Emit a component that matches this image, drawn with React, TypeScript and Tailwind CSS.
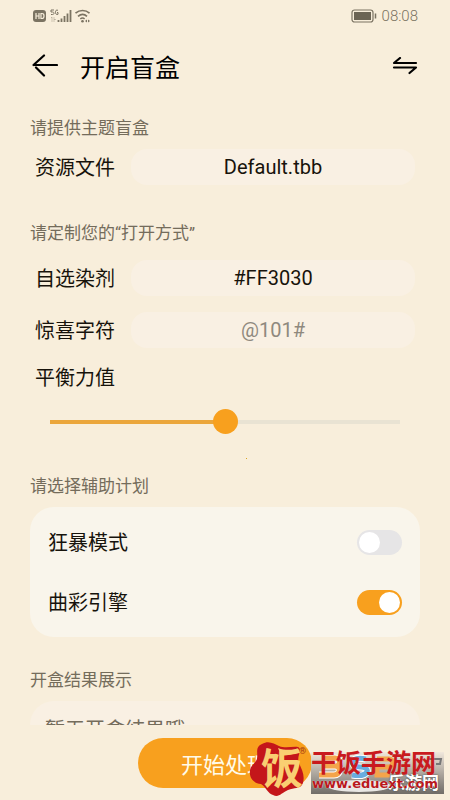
import { useState, type ReactNode } from "react";

const fontStack = "font-[Roboto,'Noto_Sans_CJK_SC',sans-serif]";
const cjkFont = "font-['Noto_Sans_CJK_SC',sans-serif]";

function StatusBar() {
  return (
    <div className="flex h-8 shrink-0 items-center justify-between px-8 text-[#7b7362]">
      <div className="flex items-center">
        <svg width="58" height="14" viewBox="0 0 58 14" fill="none" aria-label="信号状态">
          <rect x="1" y="1" width="13" height="12" rx="3" fill="currentColor" />
          <path d="M4 4v6M7 4v6M4 7h3M9 4.500v5h1c1.600 0 2-1 2-2.500s-.4-2.500-2-2.500z" stroke="#f8eedb" strokeWidth="1.200" />
          <path d="M22 1h-3v2h1.500c1 0 1.500.5 1.500 1.200S21.500 5.500 20.500 5.500H19M26 1.300c-1.800-.7-2.500.3-2.500 2s.7 2.500 2.500 2V3.500h-1" stroke="currentColor" strokeWidth="1" />
          <path d="M19 9l1-1v5M22 8v5M22 10.500h2" stroke="currentColor" strokeWidth=".8" opacity=".45" />
          <path d="M26.500 11v2M29.500 9.500V13M32.500 7v6M35.500 4.500V13M38.500 1v12" stroke="currentColor" strokeWidth="1.800" />
          <path d="M43.500 4.200c4.200-3.600 10-3.600 14 0M46 7.300c2.800-2.300 6.400-2.300 9 0" stroke="currentColor" strokeWidth="1.700" />
          <path d="M48.300 9.800c1.500-1 3-1 4.300 0" stroke="currentColor" strokeWidth="1.500" />
          <circle cx="50.500" cy="12.300" r="1.300" fill="currentColor" />
          <path d="M53 12l2-1.500v3zM58 12l-2-1.500v3z" fill="currentColor" />
        </svg>
      </div>
      <div className="flex items-center gap-1">
        <svg width="27" height="14" viewBox="0 0 27 14" fill="none" aria-label="电量">
          <rect x="1" y="1" width="21" height="12" rx="2.500" stroke="currentColor" strokeWidth="1.200" />
          <rect x="3" y="3" width="17" height="8" fill="#6b6454" />
          <path d="M24.500 4.500v5" stroke="currentColor" strokeWidth="1.500" />
        </svg>
        <span className="text-[15px] leading-5 font-light">08:08</span>
      </div>
    </div>
  );
}

function Header() {
  return (
    <header className="flex h-[68px] shrink-0 items-center px-8">
      <button type="button" aria-label="返回" className="text-black">
        <svg width="26" height="24" viewBox="0 0 26 24" fill="none" stroke="currentColor" strokeWidth="2.200" strokeLinecap="round">
          <path d="M1.500 11h23.500M12 1.500L1.500 11M4 13.500l8 8" />
        </svg>
      </button>
      <h1 className={`ml-[22px] flex-1 text-[25px] leading-8 text-black ${cjkFont}`}>开启盲盒</h1>
      <button type="button" aria-label="切换" className="text-black">
        <svg width="26" height="18" viewBox="0 0 26 18" fill="none" stroke="currentColor" strokeWidth="2.200" strokeLinecap="round" strokeLinejoin="round">
          <path d="M24 6H2L8 1M2 10.500h22L17.500 16" />
        </svg>
      </button>
    </header>
  );
}

function SectionTitle({ children }: { children: ReactNode }) {
  return <h2 className="text-[17px] leading-6 text-[#746c5b]">{children}</h2>;
}

function Field({ id, label, value, placeholder }: { id: string; label: string; value?: string; placeholder?: string }) {
  return (
    <div className="flex items-center pr-[5px] pl-[5px]">
      <label htmlFor={id} className={`w-24 shrink-0 text-xl leading-7 text-[#17130b] ${cjkFont}`}>
        {label}
      </label>
      <input
        id={id}
        type="text"
        defaultValue={value}
        placeholder={placeholder}
        className="h-9 min-w-0 flex-1 rounded-2xl bg-[#f9f0e3] text-center text-xl text-[#17130b] outline-none placeholder:text-[#8f897e]"
      />
    </div>
  );
}

function Toggle({ id, label, defaultChecked }: { id: string; label: string; defaultChecked?: boolean }) {
  return (
    <div className="flex h-[60px] items-center justify-between">
      <label htmlFor={id} className={`text-xl leading-7 text-[#17130b] ${cjkFont}`}>
        {label}
      </label>
      <input
        id={id}
        type="checkbox"
        role="switch"
        defaultChecked={defaultChecked}
        className="flex h-[25px] w-[45px] appearance-none items-center rounded-full bg-[#e6e5e6] px-[2px] before:size-[21px] before:rounded-full before:bg-white checked:justify-end checked:bg-[#f8a01e]"
      />
    </div>
  );
}

function Balance() {
  const [value, setValue] = useState(50);

  return (
    <div className="mt-[15px]">
      <label htmlFor="balance" className={`block pl-[5px] text-xl leading-7 text-[#17130b] ${cjkFont}`}>
        平衡力值
      </label>
      <div className="mt-[18px] flex px-5">
        <input
          id="balance"
          type="range"
          value={value}
          onChange={(e) => setValue(Number(e.target.value))}
          style={{ backgroundImage: `linear-gradient(to right, #eba63b ${value}%, #e9e3d3 ${value}%)` }}
          className="h-[25px] min-w-0 flex-1 appearance-none bg-[length:100%_4px] bg-center bg-no-repeat [&::-webkit-slider-thumb]:size-[25px] [&::-webkit-slider-thumb]:appearance-none [&::-webkit-slider-thumb]:rounded-full [&::-webkit-slider-thumb]:bg-[#f8a01e]"
        />
      </div>
    </div>
  );
}

function Watermark() {
  return (
    <div className="pointer-events-none absolute right-[6px] bottom-[3px] flex items-end">
      <div className="relative h-14 w-[62px]">
        <svg width="62" height="56" viewBox="0 0 62 56" aria-hidden="true">
          <path
            d="M13 3C20-1 25 3 30 5C37 8 43 5 49 6C54 8 47 16 50 22C53 29 56 34 54 42C51 49 45 46 39 49C32 52 30 57 24 54C19 53 17 46 12 43C4 42 0 37 1 29C2 24 6 23 8 18C9 12 6 6 13 3Z"
            fill="#c4161a"
          />
          <path d="M29 7c7 3 14 1 19 2-4 4-10 4-17 3" fill="#f9cf72" />
        </svg>
        <span className="absolute top-1 left-3 text-[42px] leading-[50px] font-bold text-[#f9cf72]">饭</span>
        <span className="absolute top-1 left-[50px] text-[9px] leading-3 text-[#a33a12]">®</span>
      </div>
      <div className="relative mb-[3px] h-[42px] w-[133px] bg-linear-to-b from-[#f1e8dc] to-[#716d68]">
        <svg className="absolute inset-0" width="133" height="42" viewBox="0 0 133 42" fill="none" aria-hidden="true">
          <ellipse cx="48" cy="34" rx="32" ry="6" fill="#e9e7e4" />
          <path d="M12 6h12c6 0 6 8 0 8H12M24 14c6 0 6 9-1 9H8" stroke="#fff" strokeWidth="7" />
          <path d="M12 6h12c6 0 6 8 0 8H12M24 14c6 0 6 9-1 9H8" stroke="#f4a44b" strokeWidth="5" />
          <path d="M55 7c-16-4-18 8-6 8s9 11-8 8" stroke="#fff" strokeWidth="7" />
          <path d="M55 7c-16-4-18 8-6 8s9 11-8 8" stroke="#69addf" strokeWidth="5" />
          <path d="M66 7h12c5 0 5 8 0 8H66v8h13" stroke="#f4a44b" strokeWidth="5" />
          <path d="M117 7h13l-1 5h-4" stroke="#777" strokeWidth="2" />
        </svg>
        <span className="absolute top-[22px] left-[77px] text-[17px] leading-[18px] font-bold whitespace-nowrap text-white [text-shadow:0_0_2px_#444]">
          乐游网
        </span>
        <span className="absolute -top-1 left-0 text-[25px] leading-8 font-bold whitespace-nowrap text-[#c91a1e]">
          干饭手游网
        </span>
        <span className="absolute top-6 left-px font-['DejaVu_Sans',sans-serif] text-[13px] leading-4 font-bold whitespace-nowrap text-[#b9181c] [text-shadow:0_0_1px_#fff]">
          www.eduext.com
        </span>
      </div>
    </div>
  );
}

export default function App() {
  return (
    <div className={`relative flex h-screen flex-col overflow-hidden bg-[#f8eedb] ${fontStack}`}>
      <StatusBar />
      <Header />

      <main className="min-h-0 flex-1 overflow-hidden px-[30px] pt-4">
        <section>
          <SectionTitle>请提供主题盲盒</SectionTitle>
          <div className="mt-[9px]">
            <Field id="source" label="资源文件" value="Default.tbb" />
          </div>
        </section>

        <section className="mt-9">
          <SectionTitle>请定制您的“打开方式”</SectionTitle>
          <div className="mt-[15px] flex flex-col gap-4">
            <Field id="color" label="自选染剂" value="#FF3030" />
            <Field id="chars" label="惊喜字符" placeholder="@101#" />
          </div>
          <Balance />
        </section>

        <section className="relative mt-10">
          <span className="absolute -top-4 left-[216px] size-px bg-[#d9a520]" />
          <SectionTitle>请选择辅助计划</SectionTitle>
          <div className="mt-[9px] rounded-3xl bg-[#f9f5eb] px-[18px] py-[5px]">
            <Toggle id="rage" label="狂暴模式" />
            <Toggle id="engine" label="曲彩引擎" defaultChecked />
          </div>
        </section>

        <section className="mt-[31px]">
          <SectionTitle>开盒结果展示</SectionTitle>
          <p className="mt-[9px] rounded-3xl bg-[#f9f0e3] p-[15px] text-xl leading-7 text-[#746c5b]">
            暂无开盒结果哦
          </p>
        </section>
      </main>

      <footer className="flex h-[75px] shrink-0 items-start justify-center pt-[13px]">
        <button type="button" className={`h-[50px] w-[174px] rounded-full bg-[#f8a01e] text-[22px] leading-8 text-[#fffbe9] ${cjkFont}`}>
          开始处理
        </button>
      </footer>

      <Watermark />
    </div>
  );
}
